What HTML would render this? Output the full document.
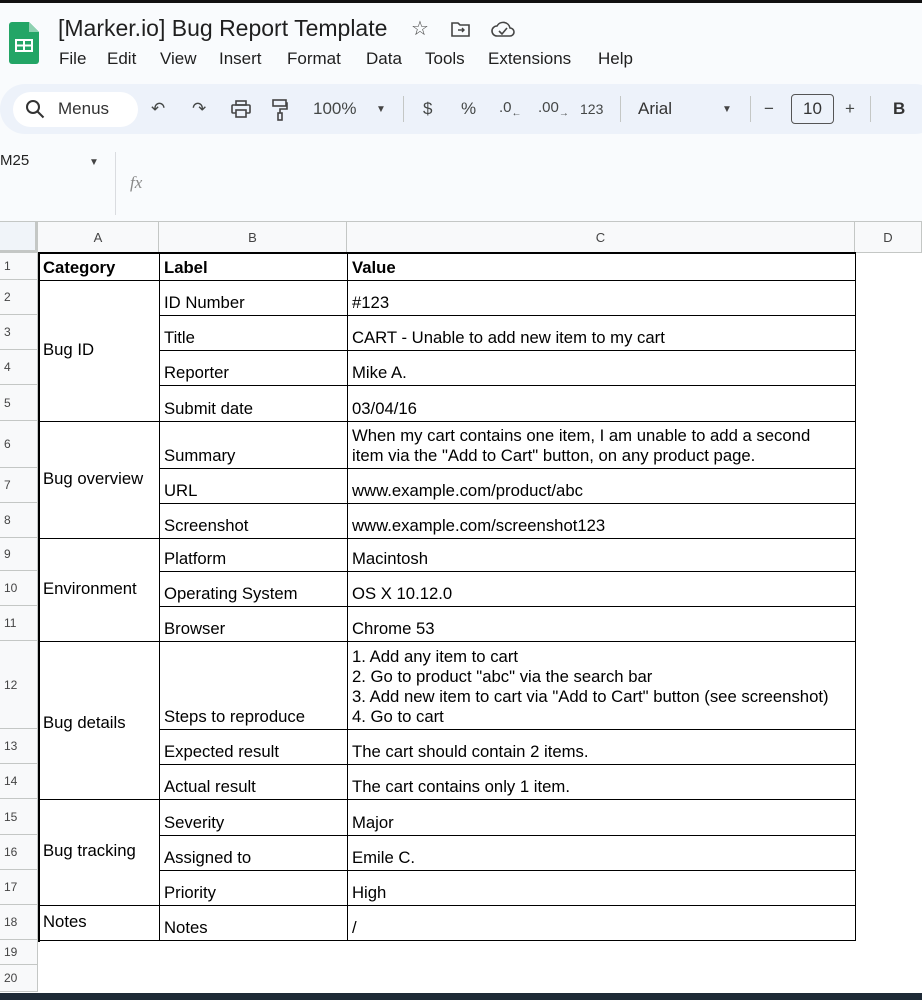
<!DOCTYPE html>
<html><head><meta charset="utf-8"><style>
*{margin:0;padding:0;box-sizing:border-box}
body{width:922px;height:1000px;overflow:hidden;background:#f9fbfd;font-family:"Liberation Sans",Arial,sans-serif;position:relative;color:#000}
.a{position:absolute}
.t{position:absolute;font-size:23px;color:#1f1f1f}
.m{position:absolute;font-size:17px;color:#1f1f1f;top:49px}
.tb{position:absolute;font-size:17px;color:#444746;top:99px}
.c{position:absolute;border-right:1.5px solid #000;border-bottom:1.5px solid #000;font-size:16.7px;padding:0 4px 2px 5px;display:flex;align-items:flex-end;line-height:20px;white-space:nowrap;z-index:2}
.mid{align-items:center}
.rn{position:absolute;left:0;width:38px;font-size:12px;color:#444;padding-left:4px;display:flex;align-items:center;border-bottom:1px solid #c4c7c5;background:#f8f9fa;border-right:1px solid #c4c7c5}
.ch{position:absolute;top:222px;height:31px;font-size:13px;color:#444;display:flex;align-items:center;justify-content:center;border-right:1px solid #c4c7c5;background:#f8f9fa;border-bottom:1px solid #c4c7c5}
</style></head><body>
<div class="a" style="left:0;top:0;width:922px;height:3px;background:#111"></div>
<svg class="a" style="left:9px;top:22px" width="30" height="42" viewBox="0 0 30 42"><path d="M3 0h17l10 10v29a3 3 0 0 1-3 3H3a3 3 0 0 1-3-3V3a3 3 0 0 1 3-3z" fill="#23a566"/><path d="M20 0l10 10H20z" fill="#8ed1b1"/><rect x="6" y="17" width="18" height="13" fill="#fff"/><rect x="8" y="19" width="6" height="3.5" fill="#23a566"/><rect x="16" y="19" width="6" height="3.5" fill="#23a566"/><rect x="8" y="24.5" width="6" height="3.5" fill="#23a566"/><rect x="16" y="24.5" width="6" height="3.5" fill="#23a566"/></svg>
<div class="t" style="left:58px;top:15px">[Marker.io] Bug Report Template</div>
<div class="a" style="left:411px;top:16px;font-size:20px;color:#444">☆</div>
<svg class="a" style="left:451px;top:21px" width="20" height="16" viewBox="0 0 20 16"><path d="M1 2h6l2 2h9v11H1z" fill="none" stroke="#444" stroke-width="1.6"/><path d="M7 9h6M11 7l2 2-2 2" fill="none" stroke="#444" stroke-width="1.4"/></svg>
<svg class="a" style="left:491px;top:20px" width="24" height="18" viewBox="0 0 24 18"><path d="M6 16a5 5 0 0 1 0-10 7 7 0 0 1 13 2 4 4 0 0 1 0 8z" fill="none" stroke="#444" stroke-width="1.6"/><path d="M8 11l3 3 5-6" fill="none" stroke="#444" stroke-width="1.6"/></svg>
<div class="m" style="left:59px">File</div><div class="m" style="left:107px">Edit</div><div class="m" style="left:160px">View</div><div class="m" style="left:219px">Insert</div><div class="m" style="left:287px">Format</div><div class="m" style="left:366px">Data</div><div class="m" style="left:425px">Tools</div><div class="m" style="left:488px">Extensions</div><div class="m" style="left:598px">Help</div>
<div class="a" style="left:0;top:84px;width:940px;height:50px;background:#edf2fa;border-radius:25px"></div>
<div class="a" style="left:13px;top:92px;width:125px;height:35px;background:#fff;border-radius:18px"></div>
<svg class="a" style="left:25px;top:99px" width="20" height="20" viewBox="0 0 20 20"><circle cx="8" cy="8" r="6" fill="none" stroke="#333" stroke-width="2"/><path d="M12.5 12.5l6 6" stroke="#333" stroke-width="2"/></svg>
<div class="tb" style="left:58px;color:#333">Menus</div>
<div class="tb" style="left:151px">↶</div><div class="tb" style="left:192px">↷</div>
<svg class="a" style="left:231px;top:100px" width="20" height="18" viewBox="0 0 20 18"><rect x="5" y="1" width="10" height="4" fill="none" stroke="#444" stroke-width="1.6"/><rect x="1" y="5" width="18" height="8" rx="1" fill="none" stroke="#444" stroke-width="1.6"/><rect x="5" y="10" width="10" height="7" fill="#edf2fa" stroke="#444" stroke-width="1.6"/></svg>
<svg class="a" style="left:272px;top:99px" width="16" height="22" viewBox="0 0 16 22"><rect x="1" y="1" width="13" height="6" fill="none" stroke="#444" stroke-width="1.6"/><path d="M14 4h1v6H8v4" fill="none" stroke="#444" stroke-width="1.6"/><rect x="6" y="14" width="4" height="7" fill="none" stroke="#444" stroke-width="1.6"/></svg>
<div class="tb" style="left:313px">100%</div><div class="a" style="left:376px;top:104px;font-size:10px;color:#444">▼</div>
<div class="a" style="left:403px;top:96px;width:1px;height:26px;background:#c4c7c5"></div>
<div class="tb" style="left:423px">$</div><div class="tb" style="left:461px">%</div>
<div class="tb" style="left:499px;font-size:15px">.0<sub style="font-size:10px">←</sub></div>
<div class="tb" style="left:538px;font-size:15px">.00<sub style="font-size:10px">→</sub></div>
<div class="tb" style="left:580px;font-size:14px;top:101px">123</div>
<div class="a" style="left:620px;top:96px;width:1px;height:26px;background:#c4c7c5"></div>
<div class="tb" style="left:638px;color:#333">Arial</div><div class="a" style="left:722px;top:104px;font-size:10px;color:#444">▼</div>
<div class="a" style="left:750px;top:96px;width:1px;height:26px;background:#c4c7c5"></div>
<div class="tb" style="left:764px">−</div>
<div class="a" style="left:791px;top:94px;width:43px;height:30px;border:1.5px solid #555;border-radius:4px;font-size:17px;color:#333;text-align:center;line-height:27px">10</div>
<div class="tb" style="left:845px">+</div>
<div class="a" style="left:870px;top:96px;width:1px;height:26px;background:#c4c7c5"></div>
<div class="tb" style="left:893px;font-weight:bold;color:#333">B</div>
<div class="a" style="left:0;top:152px;font-size:15px;color:#222">M25</div>
<div class="a" style="left:89px;top:157px;font-size:10px;color:#444">▼</div>
<div class="a" style="left:115px;top:152px;width:1px;height:63px;background:#dadce0"></div>
<div class="a" style="left:130px;top:173px;font-size:17px;color:#888;font-style:italic;font-family:'Liberation Serif',serif">fx</div>
<div class="a" style="left:0;top:221px;width:922px;height:779px;background:#fff;border-top:1px solid #c4c7c5"></div>
<div class="a" style="left:0;top:222px;width:38px;height:31px;background:#f0f4f9;border-right:3px solid #c4c7c5;border-bottom:3px solid #c4c7c5"></div>
<div class="ch" style="left:38px;width:121px">A</div>
<div class="ch" style="left:159px;width:188px">B</div>
<div class="ch" style="left:347px;width:508px">C</div>
<div class="ch" style="left:855px;width:67px">D</div>
<div class="rn" style="top:253px;height:27px">1</div>
<div class="rn" style="top:280px;height:35px">2</div>
<div class="rn" style="top:315px;height:35px">3</div>
<div class="rn" style="top:350px;height:35px">4</div>
<div class="rn" style="top:385px;height:36px">5</div>
<div class="rn" style="top:421px;height:47px">6</div>
<div class="rn" style="top:468px;height:35px">7</div>
<div class="rn" style="top:503px;height:35px">8</div>
<div class="rn" style="top:538px;height:33px">9</div>
<div class="rn" style="top:571px;height:35px">10</div>
<div class="rn" style="top:606px;height:35px">11</div>
<div class="rn" style="top:641px;height:88px">12</div>
<div class="rn" style="top:729px;height:35px">13</div>
<div class="rn" style="top:764px;height:35px">14</div>
<div class="rn" style="top:799px;height:36px">15</div>
<div class="rn" style="top:835px;height:35px">16</div>
<div class="rn" style="top:870px;height:35px">17</div>
<div class="rn" style="top:905px;height:35px">18</div>
<div class="rn" style="top:940px;height:25px">19</div>
<div class="rn" style="top:965px;height:27px">20</div>
<div class="a" style="left:38px;top:252px;width:818px;height:1.5px;background:#000;z-index:3"></div>
<div class="a" style="left:38px;top:252px;width:1.5px;height:690px;background:#000;z-index:3"></div>
<div class="c" style="left:38px;top:252px;width:122px;height:29px;font-weight:bold">Category</div>
<div class="c" style="left:159px;top:252px;width:189px;height:29px;font-weight:bold">Label</div>
<div class="c" style="left:347px;top:252px;width:509px;height:29px;font-weight:bold">Value</div>
<div class="c mid" style="left:38px;top:280px;width:122px;height:142px">Bug ID</div>
<div class="c mid" style="left:38px;top:421px;width:122px;height:118px">Bug overview</div>
<div class="c mid" style="left:38px;top:538px;width:122px;height:104px">Environment</div>
<div class="c mid" style="left:38px;top:641px;width:122px;height:159px;padding-top:8px">Bug details</div>
<div class="c mid" style="left:38px;top:799px;width:122px;height:107px">Bug tracking</div>
<div class="c mid" style="left:38px;top:905px;width:122px;height:36px">Notes</div>
<div class="c" style="left:159px;top:280px;width:189px;height:36px">ID Number</div><div class="c" style="left:347px;top:280px;width:509px;height:36px">#123</div>
<div class="c" style="left:159px;top:315px;width:189px;height:36px">Title</div><div class="c" style="left:347px;top:315px;width:509px;height:36px">CART - Unable to add new item to my cart</div>
<div class="c" style="left:159px;top:350px;width:189px;height:36px">Reporter</div><div class="c" style="left:347px;top:350px;width:509px;height:36px">Mike A.</div>
<div class="c" style="left:159px;top:385px;width:189px;height:37px">Submit date</div><div class="c" style="left:347px;top:385px;width:509px;height:37px">03/04/16</div>
<div class="c" style="left:159px;top:421px;width:189px;height:48px">Summary</div><div class="c" style="left:347px;top:421px;width:509px;height:48px">When my cart contains one item, I am unable to add a second<br>item via the "Add to Cart" button, on any product page.</div>
<div class="c" style="left:159px;top:468px;width:189px;height:36px">URL</div><div class="c" style="left:347px;top:468px;width:509px;height:36px">www.example.com/product/abc</div>
<div class="c" style="left:159px;top:503px;width:189px;height:36px">Screenshot</div><div class="c" style="left:347px;top:503px;width:509px;height:36px">www.example.com/screenshot123</div>
<div class="c" style="left:159px;top:538px;width:189px;height:34px">Platform</div><div class="c" style="left:347px;top:538px;width:509px;height:34px">Macintosh</div>
<div class="c" style="left:159px;top:571px;width:189px;height:36px">Operating System</div><div class="c" style="left:347px;top:571px;width:509px;height:36px">OS X 10.12.0</div>
<div class="c" style="left:159px;top:606px;width:189px;height:36px">Browser</div><div class="c" style="left:347px;top:606px;width:509px;height:36px">Chrome 53</div>
<div class="c" style="left:159px;top:641px;width:189px;height:89px">Steps to reproduce</div><div class="c" style="left:347px;top:641px;width:509px;height:89px">1. Add any item to cart<br>2. Go to product "abc" via the search bar<br>3. Add new item to cart via "Add to Cart" button (see screenshot)<br>4. Go to cart</div>
<div class="c" style="left:159px;top:729px;width:189px;height:36px">Expected result</div><div class="c" style="left:347px;top:729px;width:509px;height:36px">The cart should contain 2 items.</div>
<div class="c" style="left:159px;top:764px;width:189px;height:36px">Actual result</div><div class="c" style="left:347px;top:764px;width:509px;height:36px">The cart contains only 1 item.</div>
<div class="c" style="left:159px;top:799px;width:189px;height:37px">Severity</div><div class="c" style="left:347px;top:799px;width:509px;height:37px">Major</div>
<div class="c" style="left:159px;top:835px;width:189px;height:36px">Assigned to</div><div class="c" style="left:347px;top:835px;width:509px;height:36px">Emile C.</div>
<div class="c" style="left:159px;top:870px;width:189px;height:36px">Priority</div><div class="c" style="left:347px;top:870px;width:509px;height:36px">High</div>
<div class="c" style="left:159px;top:905px;width:189px;height:36px">Notes</div><div class="c" style="left:347px;top:905px;width:509px;height:36px">/</div>
<div class="a" style="left:0;top:993px;width:922px;height:7px;background:#1e2a36"></div>
</body></html>
